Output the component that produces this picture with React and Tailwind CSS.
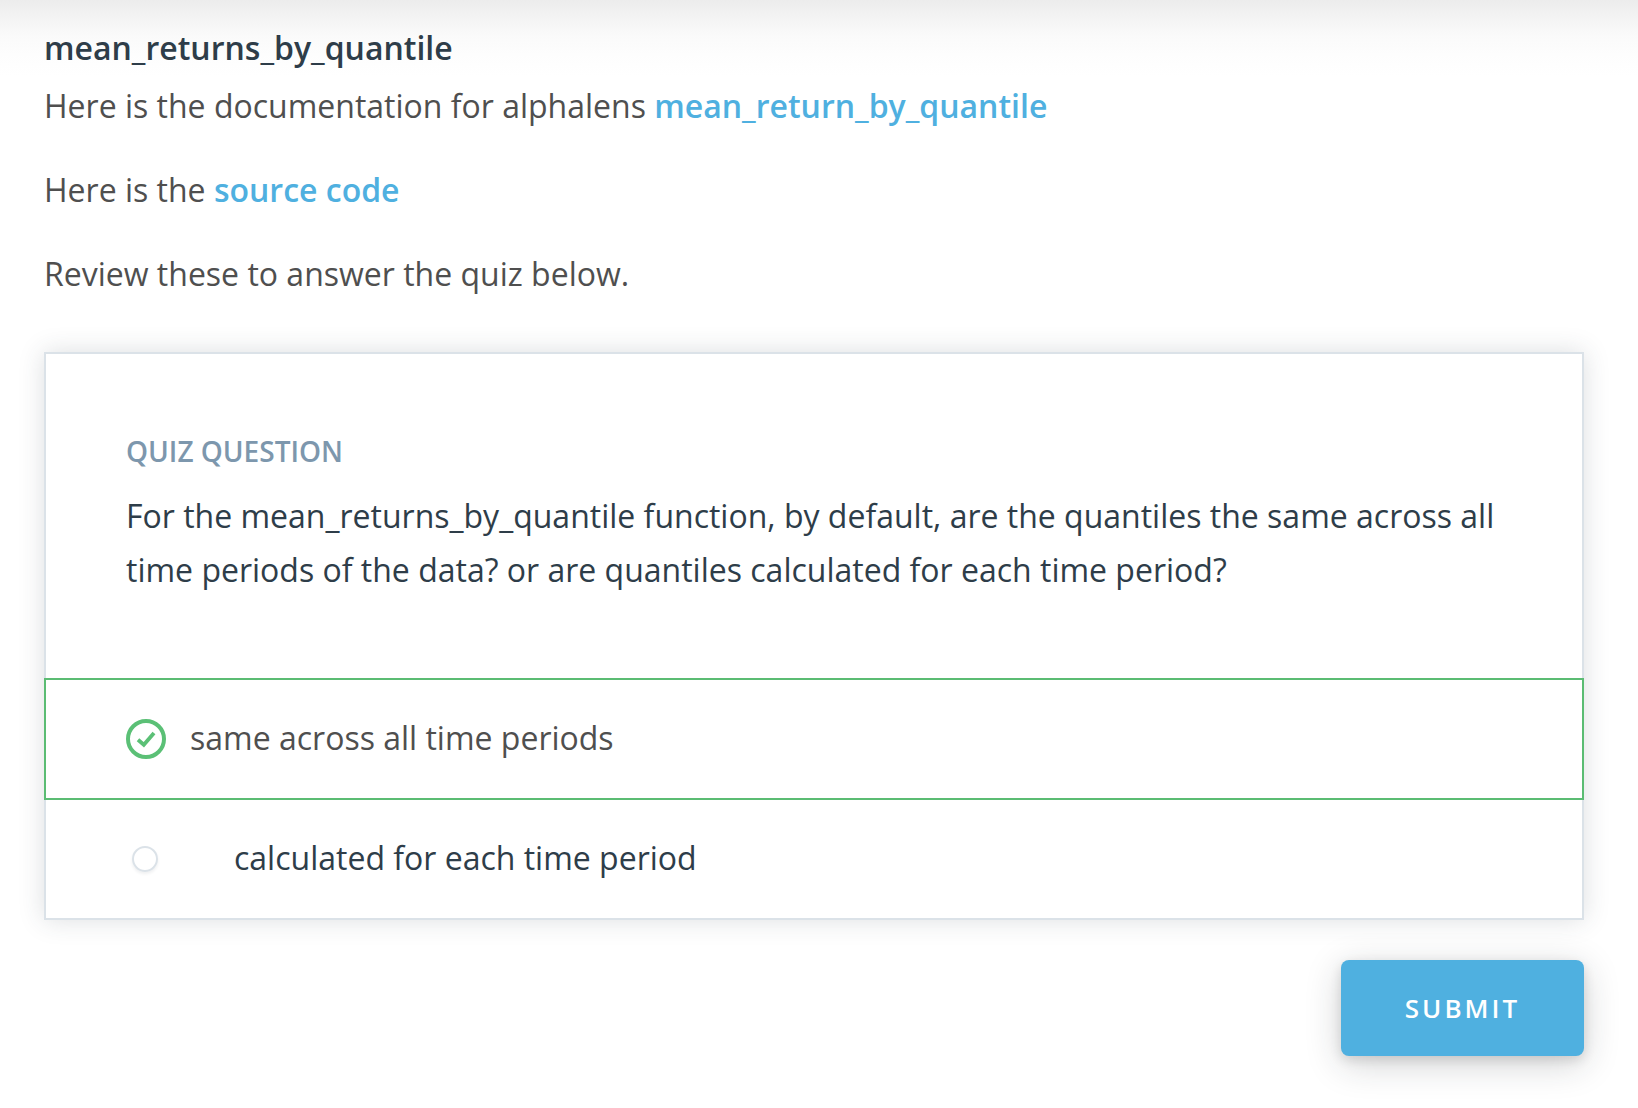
export default function App() {
  return (
    <div className="h-[1108px] w-[1638px] overflow-hidden bg-white bg-[linear-gradient(to_bottom,#ececec_0px,#f3f3f3_17px,#fafafa_35px,#fdfdfd_54px,#ffffff_76px)] pl-11 pr-[54px] pt-[21px] font-['Open_Sans',sans-serif] text-[32px] text-[#4f4f4f]">
      <h1 className="h-[54px] text-[32px] leading-[54px] font-semibold text-[#2e3d49]">mean_returns_by_quantile</h1>
      <p className="mt-1 leading-[54px]">Here is the documentation for alphalens <a className="font-semibold text-[#4fb0e0]">mean_return_by_quantile</a></p>
      <p className="mt-[30px] leading-[54px]">Here is the <a className="font-semibold text-[#4fb0e0]">source code</a></p>
      <p className="mt-[30px] leading-[54px]">Review these to answer the quiz below.</p>
      <section className="mt-[51px] h-[568px] border-2 border-[#dbe2e8] bg-white shadow-[0_0_24px_rgba(46,61,73,0.17)]">
        <div className="h-[324px] px-20 pt-[77px]">
          <h2 className="text-[28px] leading-10 font-semibold text-[#7d97ad]">QUIZ QUESTION</h2>
          <p className="mt-[18px] w-[1400px] leading-[54px] text-[#2e3d49]">For the mean_returns_by_quantile function, by default, are the quantiles the same across all<br />time periods of the data? or are quantiles calculated for each time period?</p>
        </div>
        <div className="-mx-0.5 flex h-[122px] items-center border-2 border-[#5bbc73] pl-20">
          <svg className="mr-6 size-10" viewBox="0 0 40 40" fill="none" stroke="#5bc076"><circle cx="20" cy="20" r="18" strokeWidth="4" /><path d="m12 20.8 5.8 5L28 14" strokeWidth="3.8" /></svg>
          <span className="pb-0.5">same across all time periods</span>
        </div>
        <div className="flex h-[118px] items-center pl-[82px] text-[#2e3d49]">
          <span className="mx-1 size-[26px] rounded-full border-2 border-[#dbe2e8] shadow-[0_2px_3px_rgba(46,61,73,0.08)]" />
          <span className="ml-[72px] pb-0.5">calculated for each time period</span>
        </div>
      </section>
      <button className="mt-10 ml-auto block h-24 w-[243px] rounded-lg bg-[#4fb0e0] text-[26px] font-semibold tracking-[3px] text-white shadow-[0_8px_36px_rgba(30,35,40,0.2),0_4px_12px_rgba(0,0,0,0.12)]">SUBMIT</button>
    </div>
  );
}
